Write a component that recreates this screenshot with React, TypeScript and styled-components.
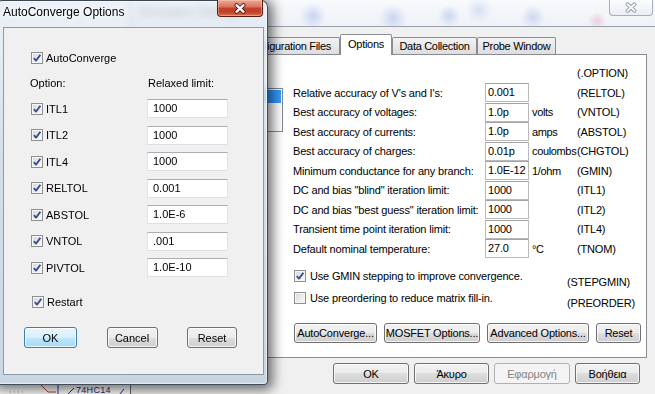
import React from "react";
import styled, { createGlobalStyle } from "styled-components";

const UI_FONT = `"Liberation Sans", Arial, sans-serif`;

const GlobalStyle = createGlobalStyle`
  html, body { margin: 0; padding: 0; background: #ffffff; }
  body { font-family: ${UI_FONT}; }
  * { box-sizing: border-box; }
`;

const Desktop = styled.div`
  position: relative;
  width: 655px;
  height: 394px;
  overflow: hidden;
  background: #fdfdfd;
  font-family: ${UI_FONT};
  color: #000;
`;

/* ---------- schematic canvas behind the windows ---------- */
const SchematicCanvas = styled.svg`
  position: absolute;
  left: 0;
  top: 0;
  width: 655px;
  height: 394px;
`;

const SchematicLabel = styled.span<{ $x: number; $y: number }>`
  position: absolute;
  left: ${(p) => p.$x}px;
  top: ${(p) => p.$y}px;
  font-size: 9px;
  line-height: 9px;
  color: #2a2a7e;
  letter-spacing: 0.3px;
`;

/* ---------- shared controls ---------- */
const CheckBoxBox = styled.span<{ $size: number }>`
  width: ${(p) => p.$size}px;
  height: ${(p) => p.$size}px;
  flex: none;
  border: 1px solid #8e8f8f;
  background: linear-gradient(135deg, #d3d5d8 0%, #e9ebee 50%, #fafafa 100%);
  box-shadow: inset 0 0 0 1px #f6f6f6;
  display: inline-flex;
  align-items: center;
  justify-content: center;
`;

const CheckBox = ({ checked, size = 12 }: { checked: boolean; size?: number }) => (
  <CheckBoxBox $size={size}>
    {checked && (
      <svg width={size - 2} height={size - 2} viewBox="0 0 10 10">
        <path d="M1.8 5.2 L4 7.6 L8.4 1.8" fill="none" stroke="#3b4f92" strokeWidth="1.9" strokeLinejoin="round" />
      </svg>
    )}
  </CheckBoxBox>
);

const Button = styled.button<{ $w: number; $h: number; $variant?: "default" | "disabled"; $tight?: boolean }>`
  width: ${(p) => p.$w}px;
  height: ${(p) => p.$h}px;
  flex: none;
  padding: 0;
  border-radius: 3px;
  font-family: ${UI_FONT};
  font-size: 11px;
  letter-spacing: ${(p) => (p.$tight ? "-0.2px" : "0")};
  border: 1px solid ${(p) => (p.$variant === "default" ? "#3c7fb1" : p.$variant === "disabled" ? "#adb2b5" : "#707070")};
  color: ${(p) => (p.$variant === "disabled" ? "#838383" : "#000")};
  background: ${(p) =>
    p.$variant === "default"
      ? "linear-gradient(#eaf6fd 0%, #d9f0fc 50%, #bee6fd 50%, #a7d9f5 100%)"
      : p.$variant === "disabled"
      ? "#f4f4f4"
      : "linear-gradient(#f2f2f2 0%, #ebebeb 50%, #dddddd 50%, #cfcfcf 100%)"};
  box-shadow: inset 0 0 0 1px rgba(255, 255, 255, ${(p) => (p.$variant === "disabled" ? 0 : 0.75)});
  display: inline-flex;
  align-items: center;
  justify-content: center;
`;

/* ---------- background window (Simulation Settings) ---------- */
const BackWindow = styled.div`
  position: absolute;
  left: 130px;
  top: 0;
  width: 536px;
  height: 400px;
  display: flex;
  flex-direction: column;
  border-left: 1px solid #5e6873;
  background: #f0f0f0;
`;

const BackGlass = styled.div`
  height: 27px;
  flex: none;
  display: flex;
  align-items: flex-start;
  justify-content: space-between;
  padding: 0 13px 0 7px;
  border-bottom: 1px solid #98a2ad;
  background:
    radial-gradient(circle at 182px 16px, rgba(110, 140, 225, 0.32), transparent 13px),
    radial-gradient(circle at 262px 18px, rgba(110, 140, 225, 0.3), transparent 14px),
    radial-gradient(circle at 318px 16px, rgba(110, 140, 225, 0.3), transparent 11px),
    radial-gradient(circle at 348px 10px, rgba(110, 140, 225, 0.22), transparent 13px),
    radial-gradient(circle at 402px 17px, rgba(110, 140, 225, 0.28), transparent 12px),
    radial-gradient(circle at 466px 21px, rgba(225, 120, 170, 0.3), transparent 9px),
    linear-gradient(#f8fafc, #eef2f7);
`;

const BackTitle = styled.span`
  padding-top: 5px;
  font-size: 12px;
  line-height: 15px;
  color: #1c1c1c;
`;

const InactiveClose = styled.div`
  width: 44px;
  height: 16px;
  border: 1px solid #a6afb9;
  border-top: none;
  border-radius: 0 0 4px 4px;
  background: linear-gradient(#fcfdfe, #e9eef3);
  display: flex;
  align-items: center;
  justify-content: center;
`;

const BackBody = styled.div`
  flex: 1;
  display: flex;
  flex-direction: column;
  padding: 7px 19px 0 7px;
`;

const TabStrip = styled.div`
  height: 20px;
  display: flex;
  align-items: flex-end;
  padding-left: 2px;
  position: relative;
  z-index: 1;
`;

const Tab = styled.div<{ $w: number; $active?: boolean }>`
  width: ${(p) => p.$w}px;
  height: ${(p) => (p.$active ? 21 : 17)}px;
  margin-bottom: ${(p) => (p.$active ? -1 : 0)}px;
  border: 1px solid #898c95;
  border-bottom: none;
  border-radius: 2px 2px 0 0;
  background: ${(p) => (p.$active ? "#ffffff" : "linear-gradient(#f3f3f3, #e8e8e8 50%, #dddddd)")};
  padding-bottom: ${(p) => (p.$active ? 3 : 0)}px;
  display: flex;
  align-items: center;
  justify-content: center;
  font-size: 11px;
  letter-spacing: -0.3px;
  white-space: nowrap;
  overflow: hidden;
`;

const Panel = styled.div`
  height: 304px;
  flex: none;
  background: #ffffff;
  border: 1px solid #898c95;
  display: flex;
  align-items: flex-start;
  padding-left: 7px;
`;

const ListBox = styled.div`
  margin-top: 33px;
  width: 137px;
  height: 44px;
  flex: none;
  border: 1px solid #828790;
  background: #fff;
  padding: 1px;
`;

const ListItem = styled.div<{ $selected?: boolean }>`
  height: 13px;
  background: ${(p) => (p.$selected ? "#3399ff" : "transparent")};
`;

const OptionsForm = styled.div`
  margin-left: 10px;
  padding-top: 8.5px;
  display: flex;
  flex-direction: column;
  font-size: 11px;
  letter-spacing: -0.17px;
`;

const SettingsGrid = styled.div`
  display: grid;
  grid-template-columns: 192px 44px 48px auto;
  grid-auto-rows: 19.5px;
  align-items: center;
  white-space: nowrap;
`;

const HeaderCode = styled.span`
  grid-column: 4;
`;

const FieldInput = styled.input`
  width: 44px;
  height: 19px;
  border: 1px solid #b9b9b9;
  border-top-color: #a3a3a3;
  padding: 0 0 1px 2px;
  font-family: ${UI_FONT};
  font-size: 11px;
  letter-spacing: -0.17px;
  color: #000;
  background: #fff;
  outline: none;
`;

const UnitText = styled.span`
  padding-left: 3px;
  letter-spacing: -0.35px;
`;

const CheckRow = styled.div`
  display: grid;
  grid-template-columns: 274px auto;
  height: 21.5px;
  white-space: nowrap;
`;

const PanelCheckLabel = styled.label`
  height: 16px;
  align-self: start;
  display: flex;
  align-items: center;
  gap: 4px;
  padding-left: 1px;
`;

const CheckCode = styled.span`
  align-self: end;
  line-height: 16px;
`;

const CheckRows = styled.div`
  margin-top: 9.5px;
  display: flex;
  flex-direction: column;
`;

const PanelButtons = styled.div`
  margin-top: 12px;
  padding-left: 1px;
  display: flex;
  gap: 7px;
`;

const BottomButtons = styled.div`
  margin-top: 5px;
  padding-right: 7px;
  display: flex;
  justify-content: flex-end;
  gap: 5px;
`;

/* ---------- front dialog (AutoConverge Options) ---------- */
const Dialog = styled.div`
  position: absolute;
  left: -5px;
  top: 0;
  width: 273px;
  height: 385px;
  z-index: 2;
  display: flex;
  flex-direction: column;
  padding: 0 3px 9px 7px;
  border: 1px solid rgba(25, 35, 50, 0.8);
  border-radius: 7px 7px 4px 4px;
  background: linear-gradient(rgba(232, 238, 245, 0.82), rgba(207, 218, 230, 0.88) 40%, rgba(196, 209, 223, 0.9));
  backdrop-filter: blur(3px);
  box-shadow: inset 0 0 0 1px rgba(255, 255, 255, 0.5), 2px 2px 12px 3px rgba(0, 0, 0, 0.55);
`;

const TitleBar = styled.div`
  height: 26px;
  flex: none;
  display: flex;
  align-items: flex-start;
`;

const DialogTitle = styled.span`
  padding-top: 4px;
  font-size: 12px;
  line-height: 15px;
  color: #000;
  text-shadow: 0 0 6px #fff, 0 0 3px #fff;
`;

const RedClose = styled.div`
  margin-left: auto;
  margin-right: 1px;
  margin-top: -1px;
  width: 46px;
  height: 17px;
  border: 1px solid #5f1d12;
  border-top: none;
  border-radius: 0 0 4px 4px;
  background: linear-gradient(#eaa898 0%, #d9745f 42%, #c5412a 52%, #c13f2a 75%, #d9764c 100%);
  box-shadow: inset 0 0 0 1px rgba(255, 210, 190, 0.45);
  display: flex;
  align-items: center;
  justify-content: center;
`;

const DialogClient = styled.div`
  flex: 1;
  border: 1px solid #8d9aa8;
  background: #f0f0f0;
  display: flex;
  flex-direction: column;
  padding: 22.5px 0 0 27px;
  font-size: 11px;
`;

const DialogCheckLabel = styled.label<{ $indent?: number }>`
  height: 14px;
  display: flex;
  align-items: center;
  gap: 3px;
  margin-left: ${(p) => p.$indent ?? 0}px;
  white-space: nowrap;
`;

const LimitHeader = styled.div`
  margin-top: 11.5px;
  height: 14px;
  display: grid;
  grid-template-columns: 116px 81px;
  align-items: center;
`;

const HeaderText = styled.span<{ $shift: number }>`
  margin-left: ${(p) => p.$shift}px;
`;

const LimitGrid = styled.div`
  margin-top: 9px;
  display: grid;
  grid-template-columns: 116px 81px;
  grid-auto-rows: 19px;
  row-gap: 7.5px;
  align-items: center;
`;

const LimitInput = styled.input`
  width: 81px;
  height: 19px;
  border: 1px solid #dbdfe6;
  border-top-color: #abadb3;
  border-left-color: #e2e3ea;
  border-right-color: #e2e3ea;
  padding: 0 0 1px 5px;
  font-family: ${UI_FONT};
  font-size: 11px;
  color: #000;
  background: #fff;
  outline: none;
`;

const RestartRow = styled.div`
  margin-top: 17.5px;
`;

const DialogButtons = styled.div`
  margin-top: 18.5px;
  margin-left: -7px;
  width: 213px;
  display: flex;
  justify-content: space-between;
`;

/* ---------- data ---------- */
const settings = [
  { label: "Relative accuracy of V's and I's:", value: "0.001", unit: "", code: "(RELTOL)" },
  { label: "Best accuracy of voltages:", value: "1.0p", unit: "volts", code: "(VNTOL)" },
  { label: "Best accuracy of currents:", value: "1.0p", unit: "amps", code: "(ABSTOL)" },
  { label: "Best accuracy of charges:", value: "0.01p", unit: "coulombs", code: "(CHGTOL)" },
  { label: "Minimum conductance for any branch:", value: "1.0E-12", unit: "1/ohm", code: "(GMIN)" },
  { label: 'DC and bias "blind" iteration limit:', value: "1000", unit: "", code: "(ITL1)" },
  { label: 'DC and bias "best guess" iteration limit:', value: "1000", unit: "", code: "(ITL2)" },
  { label: "Transient time point iteration limit:", value: "1000", unit: "", code: "(ITL4)" },
  { label: "Default nominal temperature:", value: "27.0", unit: "°C", code: "(TNOM)" },
];

const limits = [
  { name: "ITL1", value: "1000" },
  { name: "ITL2", value: "1000" },
  { name: "ITL4", value: "1000" },
  { name: "RELTOL", value: "0.001" },
  { name: "ABSTOL", value: "1.0E-6" },
  { name: "VNTOL", value: ".001" },
  { name: "PIVTOL", value: "1.0E-10" },
];

const tabs = [
  { name: "General Settings", w: 96 },
  { name: "Configuration Files", w: 104 },
  { name: "Options", w: 52, active: true },
  { name: "Data Collection", w: 85 },
  { name: "Probe Window", w: 79 },
];

const CloseGlyph = ({ outer, inner, w }: { outer: string; inner: string; w: number }) => (
  <svg width="14" height="11" viewBox="0 0 14 11">
    <path d="M3.5 2.2 L10.5 8.8 M10.5 2.2 L3.5 8.8" stroke={outer} strokeWidth={w + 1.6} strokeLinecap="round" />
    <path d="M3.5 2.2 L10.5 8.8 M10.5 2.2 L3.5 8.8" stroke={inner} strokeWidth={w} strokeLinecap="round" />
  </svg>
);

export default function App() {
  return (
    <>
      <GlobalStyle />
      <Desktop>
        <SchematicCanvas viewBox="0 0 655 394">
          <path d="M40 384 L48 392 L56 392" fill="none" stroke="#c0392b" strokeWidth="1" />
          <line x1="58" y1="384" x2="58" y2="394" stroke="#2b3a9a" strokeWidth="1" />
          <line x1="68" y1="394" x2="74" y2="388" stroke="#2a2a7e" strokeWidth="1" />
          <line x1="120" y1="394" x2="124" y2="389" stroke="#2a2a7e" strokeWidth="1" />
          <line x1="10" y1="392" x2="24" y2="392" stroke="#9a9a9a" strokeWidth="1" strokeDasharray="1 3" />
        </SchematicCanvas>
        <SchematicLabel $x={76} $y={386}>74HC14</SchematicLabel>

        <BackWindow>
          <BackGlass>
            <BackTitle>Simulation Settings</BackTitle>
            <InactiveClose>
              <CloseGlyph outer="#8a939c" inner="#f4f6f8" w={2.2} />
            </InactiveClose>
          </BackGlass>
          <BackBody>
            <TabStrip>
              {tabs.map((t) => (
                <Tab key={t.name} $w={t.w} $active={t.active}>
                  {t.name}
                </Tab>
              ))}
            </TabStrip>
            <Panel>
              <ListBox>
                <ListItem $selected />
              </ListBox>
              <OptionsForm>
                <SettingsGrid>
                  <HeaderCode>(.OPTION)</HeaderCode>
                  {settings.map((s) => (
                    <React.Fragment key={s.code}>
                      <span>{s.label}</span>
                      <FieldInput readOnly defaultValue={s.value} />
                      <UnitText>{s.unit}</UnitText>
                      <span>{s.code}</span>
                    </React.Fragment>
                  ))}
                </SettingsGrid>
                <CheckRows>
                  <CheckRow>
                    <PanelCheckLabel>
                      <CheckBox checked />
                      Use GMIN stepping to improve convergence.
                    </PanelCheckLabel>
                    <CheckCode>(STEPGMIN)</CheckCode>
                  </CheckRow>
                  <CheckRow>
                    <PanelCheckLabel>
                      <CheckBox checked={false} />
                      Use preordering to reduce matrix fill-in.
                    </PanelCheckLabel>
                    <CheckCode>(PREORDER)</CheckCode>
                  </CheckRow>
                </CheckRows>
                <PanelButtons>
                  <Button $w={83} $h={20} $tight>AutoConverge...</Button>
                  <Button $w={96} $h={20} $tight>MOSFET Options...</Button>
                  <Button $w={102} $h={20} $tight>Advanced Options...</Button>
                  <Button $w={45} $h={20} $tight>Reset</Button>
                </PanelButtons>
              </OptionsForm>
            </Panel>
            <BottomButtons>
              <Button $w={76} $h={21} $tight>OK</Button>
              <Button $w={75} $h={21} $tight>Άκυρο</Button>
              <Button $w={76} $h={21} $tight $variant="disabled">Εφαρμογή</Button>
              <Button $w={65} $h={21} $tight>Βοήθεια</Button>
            </BottomButtons>
          </BackBody>
        </BackWindow>

        <Dialog>
          <TitleBar>
            <DialogTitle>AutoConverge Options</DialogTitle>
            <RedClose>
              <CloseGlyph outer="#4a140b" inner="#ffffff" w={2.4} />
            </RedClose>
          </TitleBar>
          <DialogClient>
            <DialogCheckLabel>
              <CheckBox checked />
              AutoConverge
            </DialogCheckLabel>
            <LimitHeader>
              <HeaderText $shift={-1}>Option:</HeaderText>
              <HeaderText $shift={1}>Relaxed limit:</HeaderText>
            </LimitHeader>
            <LimitGrid>
              {limits.map((l) => (
                <React.Fragment key={l.name}>
                  <DialogCheckLabel>
                    <CheckBox checked />
                    {l.name}
                  </DialogCheckLabel>
                  <LimitInput readOnly defaultValue={l.value} />
                </React.Fragment>
              ))}
            </LimitGrid>
            <RestartRow>
              <DialogCheckLabel $indent={1}>
                <CheckBox checked />
                Restart
              </DialogCheckLabel>
            </RestartRow>
            <DialogButtons>
              <Button $w={53} $h={21} $variant="default">OK</Button>
              <Button $w={51} $h={21}>Cancel</Button>
              <Button $w={50} $h={21}>Reset</Button>
            </DialogButtons>
          </DialogClient>
        </Dialog>
      </Desktop>
    </>
  );
}
